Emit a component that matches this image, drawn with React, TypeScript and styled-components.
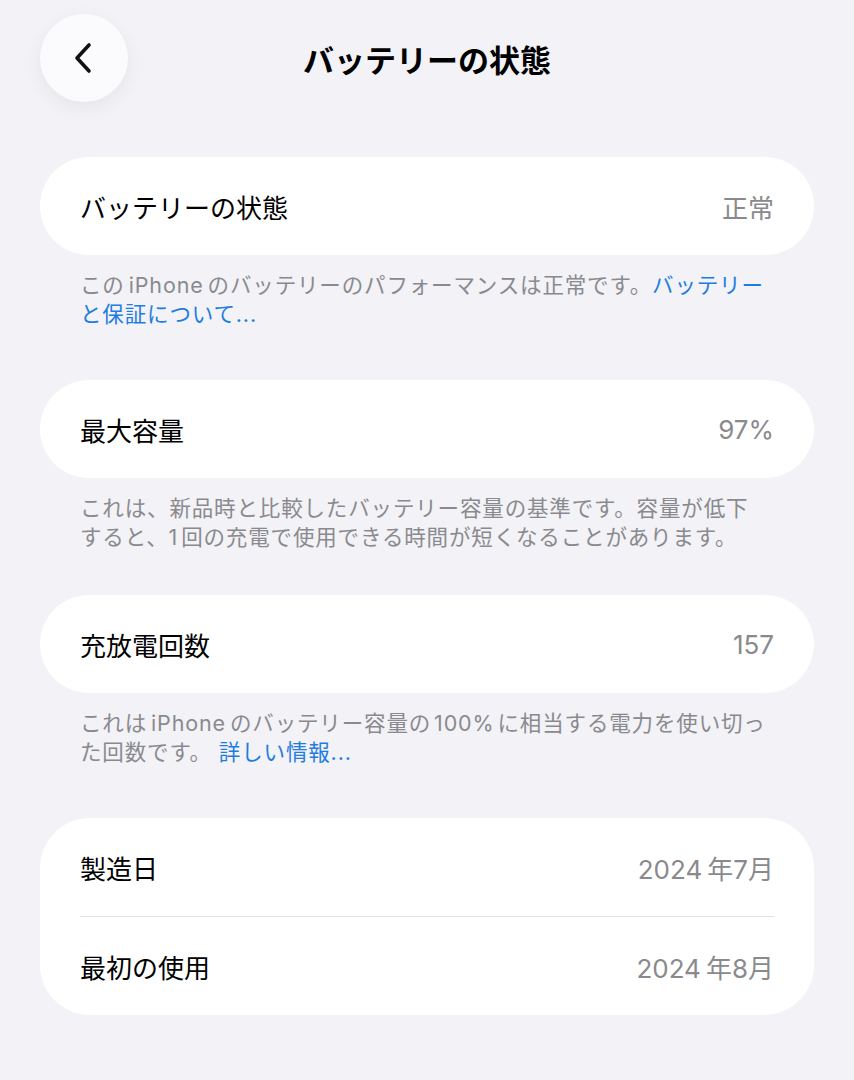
import React from "react";
import styled, { createGlobalStyle } from "styled-components";

const Global = createGlobalStyle`
  html, body { margin: 0; padding: 0; background: #f2f2f7; }
  body { font-family: "Noto Sans CJK JP", "Noto Sans", sans-serif; -webkit-font-smoothing: antialiased; }
`;

const Page = styled.div`
  width: 854px;
  min-height: 1080px;
  box-sizing: border-box;
  padding: 14px 40px 40px;
  background: #f2f2f7;
`;

const Header = styled.header`
  display: grid;
  grid-template-columns: 88px 1fr 88px;
  align-items: center;
  height: 88px;
  margin-bottom: 55px;
`;

const BackButton = styled.button`
  width: 88px;
  height: 88px;
  border-radius: 50%;
  border: none;
  background: #fbfbfd;
  box-shadow: 0 6px 20px rgba(0, 0, 0, 0.06);
  display: flex;
  align-items: center;
  justify-content: center;
  padding: 0;
`;

const Title = styled.h1`
  margin: 0;
  text-align: center;
  font-size: 31px;
  font-weight: 700;
  color: #000;
`;

const Section = styled.section<{ $after: number }>`
  margin-bottom: ${(p) => p.$after}px;
`;

const Card = styled.div`
  background: #fff;
  border-radius: 50px;
  padding: 0 40px;
`;

const Row = styled.div`
  display: flex;
  align-items: center;
  justify-content: space-between;
  height: 98px;
  & + & {
    border-top: 1px solid #dedee3;
  }
`;

const Label = styled.span`
  font-size: 26px;
  color: #000;
`;

const Value = styled.span`
  font-family: "Inter", "Noto Sans CJK JP", sans-serif;
  font-size: 26px;
  color: #8a8a8e;
`;

/* Latin run inside Japanese text, spaced like the system's auto-spacing */
const Latin = styled.span<{ $l?: number; $r?: number }>`
  margin-left: ${(p) => p.$l ?? 0}px;
  margin-right: ${(p) => p.$r ?? 0}px;
`;

const Footer = styled.p`
  margin: 0;
  padding: 16px 40px 0;
  font-family: "Inter", "Noto Sans CJK JP", sans-serif;
  font-size: 21.5px;
  letter-spacing: 0.85px;
  line-height: 29px;
  color: #8a8a8e;
  white-space: nowrap;
`;

const Link = styled.a`
  color: #1f7ddf;
  text-decoration: none;
`;

const Chevron = () => (
  <svg width="20" height="32" viewBox="0 0 20 32" fill="none">
    <path d="M15 3 L3 16 L15 29" stroke="#111" strokeWidth="3.6" strokeLinecap="round" strokeLinejoin="round" />
  </svg>
);

export default function App() {
  return (
    <>
      <Global />
      <Page>
        <Header>
          <BackButton aria-label="戻る">
            <Chevron />
          </BackButton>
          <Title>バッテリーの状態</Title>
          <span />
        </Header>

        <Section $after={51}>
          <Card>
            <Row>
              <Label>バッテリーの状態</Label>
              <Value>正常</Value>
            </Row>
          </Card>
          <Footer>
            この<Latin $l={4} $r={4}>iPhone</Latin>のバッテリーのパフォーマンスは正常です。<Link>バッテリー<br />と保証について...</Link>
          </Footer>
        </Section>

        <Section $after={43}>
          <Card>
            <Row>
              <Label>最大容量</Label>
              <Value>97%</Value>
            </Row>
          </Card>
          <Footer>
            これは、新品時と比較したバッテリー容量の基準です。容量が低下<br />すると、<Latin $r={3}>1</Latin>回の充電で使用できる時間が短くなることがあります。
          </Footer>
        </Section>

        <Section $after={51}>
          <Card>
            <Row>
              <Label>充放電回数</Label>
              <Value>157</Value>
            </Row>
          </Card>
          <Footer>
            これは<Latin $l={4} $r={4}>iPhone</Latin>のバッテリー容量の<Latin $l={3} $r={3}>100%</Latin>に相当する電力を使い切っ<br />た回数です。 <Link>詳しい情報...</Link>
          </Footer>
        </Section>

        <Section $after={40}>
          <Card>
            <Row>
              <Label>製造日</Label>
              <Value><Latin $r={5}>2024</Latin>年7月</Value>
            </Row>
            <Row>
              <Label>最初の使用</Label>
              <Value><Latin $r={5}>2024</Latin>年8月</Value>
            </Row>
          </Card>
        </Section>
      </Page>
    </>
  );
}
